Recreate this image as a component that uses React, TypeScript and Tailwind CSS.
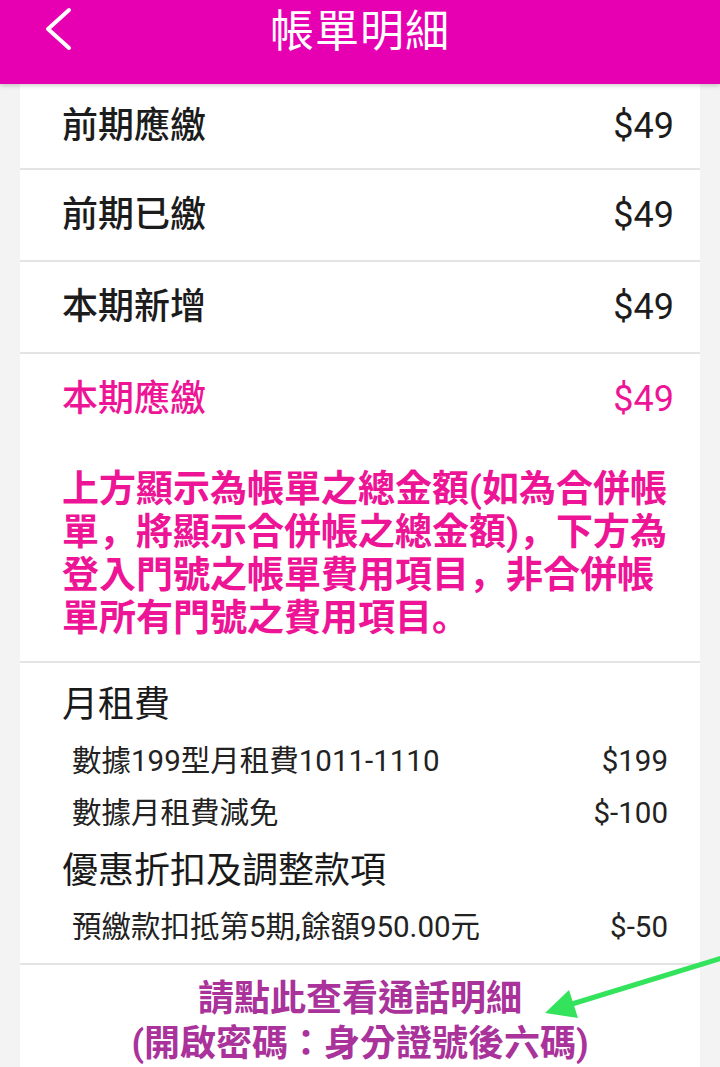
import { ReactNode } from "react";

const FONT = 'Roboto, "Noto Sans CJK TC", sans-serif';

interface Summary {
  label: string;
  amount: string;
  h: string;
}

const SUMMARY: Summary[] = [
  { label: "前期應繳", amount: "$49", h: "h-[84px]" },
  { label: "前期已繳", amount: "$49", h: "h-[90px]" },
  { label: "本期新增", amount: "$49", h: "h-[90px]" },
];

function Divider() {
  return <div className="h-[2px] bg-[#e4e4e4]" />;
}

function Item({ label, amount }: { label: string; amount: string }) {
  return (
    <div className="h-[52px] flex items-center justify-between pl-[52px] pr-[32px] text-[29.5px] text-[#222]">
      <span>{label}</span>
      <span>{amount}</span>
    </div>
  );
}

function Heading({ children, className = "" }: { children: ReactNode; className?: string }) {
  return (
    <div className={`px-[42px] text-[36px] leading-[44px] text-[#1a1a1a] ${className}`}>
      {children}
    </div>
  );
}

export default function App() {
  return (
    <div
      className="relative w-[720px] h-[1067px] overflow-hidden bg-[#f3f3f3]"
      style={{ fontFamily: FONT }}
    >
      {/* header */}
      <div className="relative z-10 h-[84px] bg-[#e700b2] shadow-[0_2px_4px_rgba(0,0,0,0.18)]">
        <div className="relative h-[64px] flex items-center justify-center">
          <svg
            className="absolute left-[40px] top-[4px]"
            width="40"
            height="52"
            viewBox="0 0 40 52"
            fill="none"
          >
            <polyline
              points="29,6 8,25 29,44"
              stroke="white"
              strokeWidth="4"
              strokeLinecap="round"
              strokeLinejoin="round"
            />
          </svg>
          <h1 className="text-[44px] text-white tracking-[1px]">帳單明細</h1>
        </div>
      </div>

      {/* card */}
      <div className="mx-[20px] bg-white">
        {SUMMARY.map((row) => (
          <div key={row.label}>
            <div className={`${row.h} flex items-center justify-between pl-[42px] pr-[26px] text-[36px] font-medium text-[#1c1c1c]`}>
              <span>{row.label}</span>
              <span className="font-normal">{row.amount}</span>
            </div>
            <Divider />
          </div>
        ))}

        {/* total + note */}
        <div className="text-[#ee1496]">
          <div className="h-[90px] flex items-center justify-between pl-[42px] pr-[26px] text-[36px] font-medium">
            <span>本期應繳</span>
            <span className="font-normal">$49</span>
          </div>
          <p
            className="pl-[42px] pr-[30px] pt-[24px] pb-[21px] text-[37px] leading-[43px] font-bold"
            style={{ fontFamily: 'Roboto, "Noto Sans CJK JP", sans-serif' }}
          >
            上方顯示為帳單之總金額(如為合併帳單，將顯示合併帳之總金額)，下方為登入門號之帳單費用項目，非合併帳單所有門號之費用項目。
          </p>
        </div>
        <Divider />

        {/* fee detail */}
        <div className="pt-[20px] pb-[10px]">
          <Heading>月租費</Heading>
          <div className="mt-[8px]">
            <Item label="數據199型月租費1011-1110" amount="$199" />
            <Item label="數據月租費減免" amount="$-100" />
          </div>
          <Heading className="mt-[10px]">優惠折扣及調整款項</Heading>
          <div className="mt-[8px]">
            <Item label="預繳款扣抵第5期,餘額950.00元" amount="$-50" />
          </div>
        </div>
        <Divider />

        {/* call detail link */}
        <div className="pt-[12px] pb-[20px] text-center text-[36px] leading-[45px] font-bold text-[#a9339b]">
          <div>請點此查看通話明細</div>
          <div>(開啟密碼：身分證號後六碼)</div>
        </div>
      </div>

      {/* green annotation arrow */}
      <svg
        className="absolute left-0 top-0 pointer-events-none"
        width="720"
        height="1067"
        viewBox="0 0 720 1067"
      >
        <line x1="722" y1="958" x2="572" y2="1004" stroke="#34e35c" strokeWidth="5" />
        <polygon points="545,1013 569,990 578,1018" fill="#34e35c" />
      </svg>
    </div>
  );
}
